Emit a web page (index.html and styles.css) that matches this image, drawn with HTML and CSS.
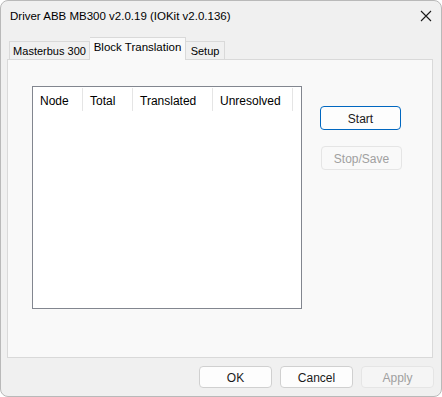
FILE: index.html
```html
<!DOCTYPE html>
<html lang="en">
<head>
    <meta charset="UTF-8">
    <meta name="viewport" content="width=device-width, initial-scale=1.0">
    <title>Driver ABB MB300</title>
    <link rel="stylesheet" href="styles.css">
</head>
<body>
    <div class="window">
        <div class="titlebar">
            <span class="title">Driver ABB MB300 v2.0.19 (IOKit v2.0.136)</span>
            <svg class="close" width="12" height="12" viewBox="0 0 12 12">
                <path d="M1 1 L11 11 M11 1 L1 11" stroke="#1a1a1a" stroke-width="1.1" fill="none"/>
            </svg>
        </div>

        <div class="tabs">
            <div class="tab tab-master">Masterbus 300</div>
            <div class="tab tab-block active">Block Translation</div>
            <div class="tab tab-setup">Setup</div>
        </div>

        <div class="panel">
            <div class="listview">
                <div class="header">
                    <div class="col col-node">Node</div>
                    <div class="col col-total">Total</div>
                    <div class="col col-trans">Translated</div>
                    <div class="col col-unres">Unresolved</div>
                </div>
            </div>
            <div class="side-buttons">
                <button class="btn btn-wide default">Start</button>
                <button class="btn btn-wide" disabled>Stop/Save</button>
            </div>
        </div>

        <div class="footer">
            <button class="btn">OK</button>
            <button class="btn">Cancel</button>
            <button class="btn" disabled>Apply</button>
        </div>
    </div>
</body>
</html>
```

FILE: styles.css
```css
body {
    margin: 0;
    padding: 0;
    background: #ffffff;
    font-family: "Liberation Sans", Arial, sans-serif;
    font-size: 11.5px;
    color: #1a1a1a;
}
.window {
    width: 442px;
    height: 397px;
    box-sizing: border-box;
    border: 1px solid #b9b9b9;
    border-radius: 8px;
    background: #f0f0f0;
    display: flex;
    flex-direction: column;
    overflow: hidden;
}
.titlebar {
    height: 29px;
    display: flex;
    align-items: center;
    justify-content: space-between;
    padding: 0 9px 0 9px;
    flex-shrink: 0;
}
.title {
    font-size: 11.5px;
    color: #000;
    padding-top: 1px;
}
.tabs {
    display: flex;
    align-items: flex-end;
    height: 29px;
    margin-left: 8px;
    position: relative;
    z-index: 1;
    flex-shrink: 0;
}
.tab {
    height: 17px;
    line-height: 19px;
    box-sizing: content-box;
    text-align: center;
    border: 1px solid #d9d9d9;
    border-bottom: none;
    background: #f0f0f0;
    color: #000;
    font-size: 11px;
    white-space: nowrap;
}
.tab-master {
    width: 79px;
}
.tab-block {
    width: 95px;
}
.tab-setup {
    width: 38px;
    border-left: none;
}
.tab.active {
    height: 22px;
    line-height: 19px;
    background: #f9f9f9;
    margin-bottom: -1px;
    border-left: none;
    font-size: 11.5px;
}
.panel {
    height: 299px;
    box-sizing: border-box;
    margin: 0 8px 0 6px;
    border: 1px solid #d9d9d9;
    background: #f9f9f9;
    display: flex;
    padding: 26px 0 0 24px;
    flex-shrink: 0;
}
.listview {
    width: 270px;
    height: 223px;
    box-sizing: border-box;
    border: 1px solid #82868f;
    background: #ffffff;
}
.header {
    display: flex;
    height: 25px;
    align-items: stretch;
}
.col {
    box-sizing: border-box;
    padding: 6px 0 0 7px;
    border-right: 1px solid #e5e5e5;
    margin: 1px 0 1px 0;
    color: #000;
    font-size: 12px;
}
.col-node { width: 50px; }
.col-total { width: 50px; }
.col-trans { width: 80px; }
.col-unres { width: 80px; }
.side-buttons {
    display: flex;
    flex-direction: column;
    gap: 16px;
    margin: 20px 0 0 18px;
}
.btn {
    width: 73px;
    height: 22px;
    box-sizing: border-box;
    border: 1px solid #d0d0d0;
    border-radius: 4px;
    background: #fdfdfd;
    font-family: "Liberation Sans", Arial, sans-serif;
    font-size: 12px;
    color: #1a1a1a;
    padding: 1px 0 0 0;
}
.btn-wide {
    width: 81px;
    height: 24px;
}
.btn.default {
    border: 1px solid #0067c0;
}
.btn:disabled {
    color: #a0a0a0;
    border-color: #e5e5e5;
    background: #f5f5f5;
}
.side-buttons .btn:disabled {
    margin-left: 1px;
    background: #f9f9f9;
}
.footer {
    display: flex;
    justify-content: flex-end;
    gap: 8px;
    margin: 8px 7px 0 0;
}
```
